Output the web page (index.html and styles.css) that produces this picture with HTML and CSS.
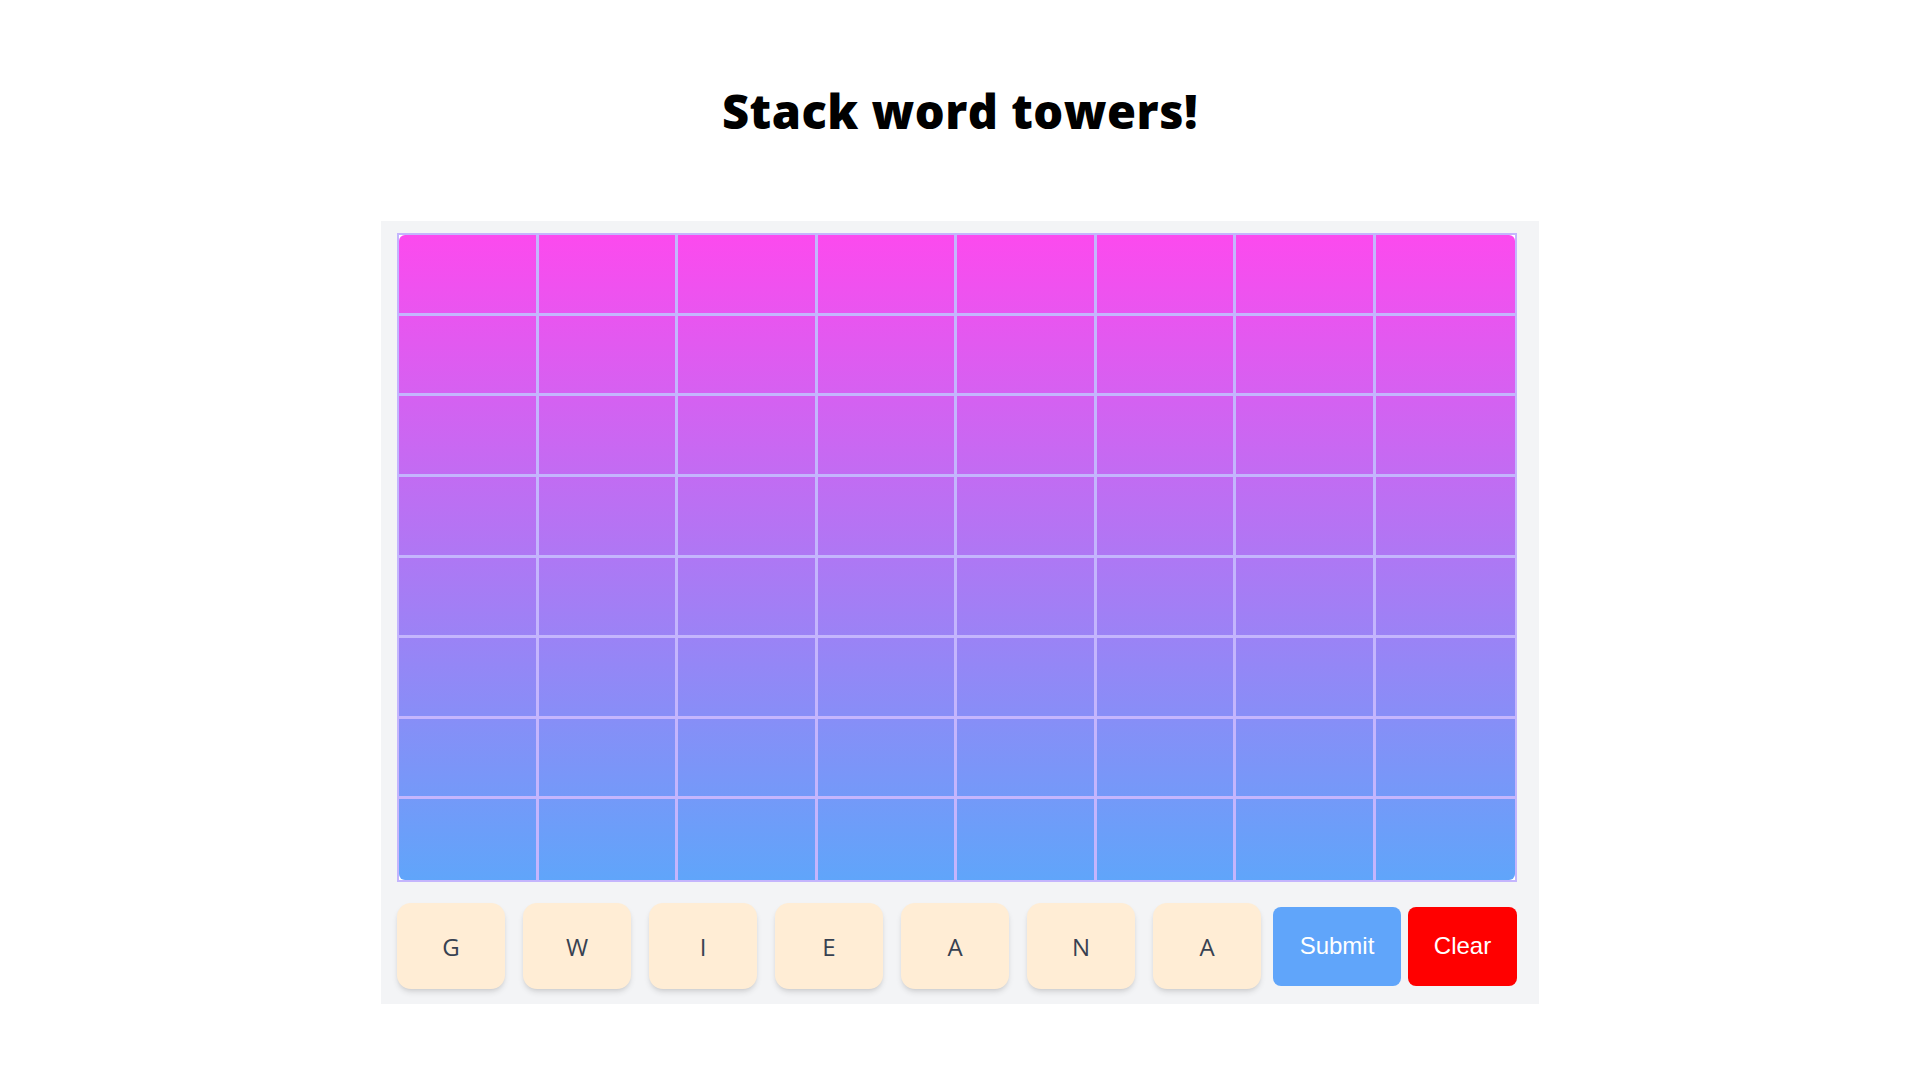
FILE: index.html
```html
<!DOCTYPE html>
<html lang="en">
<head>
<meta charset="utf-8">
<title>Stack word towers!</title>
<link rel="stylesheet" href="styles.css">
</head>
<body>
<main class="page">
  <h1 class="title">Stack word towers!</h1>
  <section class="panel">
    <div class="board">
      <div class="grid">
        <div class="cell"></div><div class="cell"></div><div class="cell"></div><div class="cell"></div><div class="cell"></div><div class="cell"></div><div class="cell"></div><div class="cell"></div>
        <div class="cell"></div><div class="cell"></div><div class="cell"></div><div class="cell"></div><div class="cell"></div><div class="cell"></div><div class="cell"></div><div class="cell"></div>
        <div class="cell"></div><div class="cell"></div><div class="cell"></div><div class="cell"></div><div class="cell"></div><div class="cell"></div><div class="cell"></div><div class="cell"></div>
        <div class="cell"></div><div class="cell"></div><div class="cell"></div><div class="cell"></div><div class="cell"></div><div class="cell"></div><div class="cell"></div><div class="cell"></div>
        <div class="cell"></div><div class="cell"></div><div class="cell"></div><div class="cell"></div><div class="cell"></div><div class="cell"></div><div class="cell"></div><div class="cell"></div>
        <div class="cell"></div><div class="cell"></div><div class="cell"></div><div class="cell"></div><div class="cell"></div><div class="cell"></div><div class="cell"></div><div class="cell"></div>
        <div class="cell"></div><div class="cell"></div><div class="cell"></div><div class="cell"></div><div class="cell"></div><div class="cell"></div><div class="cell"></div><div class="cell"></div>
        <div class="cell"></div><div class="cell"></div><div class="cell"></div><div class="cell"></div><div class="cell"></div><div class="cell"></div><div class="cell"></div><div class="cell"></div>
      </div>
    </div>
    <div class="controls">
      <div class="letters">
        <button class="tile">G</button>
        <button class="tile">W</button>
        <button class="tile">I</button>
        <button class="tile">E</button>
        <button class="tile">A</button>
        <button class="tile">N</button>
        <button class="tile">A</button>
      </div>
      <div class="actions">
        <button class="btn btn-submit">Submit</button>
        <button class="btn btn-clear">Clear</button>
      </div>
    </div>
  </section>
</main>
</body>
</html>
```
FILE: styles.css
```css
* { box-sizing: border-box; }
html, body { margin: 0; padding: 0; background: #ffffff; }
body { font-family: "Open Sans", "Liberation Sans", sans-serif; }

.page {
  display: flex;
  flex-direction: column;
  align-items: center;
}

.title {
  margin: 82px 0 0 0;
  height: 58px;
  line-height: 58px;
  font-family: "Open Sans", "Lato", sans-serif;
  font-weight: 800;
  font-size: 47px;
  color: #000;
  letter-spacing: 0.5px;
}

.panel {
  margin-top: 81px;
  width: 1158px;
  background: #f3f4f6;
  padding: 12px 22px 15px 16px;
}

.board {
  width: 1120px;
  height: 649px;
  border: 2px solid #c4b5fd;
  background: #ffffff;
}

.grid {
  width: 100%;
  height: 100%;
  border-radius: 6px;
  background: linear-gradient(to bottom, #fc4aee 0%, #60a5fa 100%);
  display: grid;
  grid-template-columns: repeat(8, 1fr);
  grid-template-rows: repeat(8, 1fr);
}

.cell {
  border-right: 3px solid #c4b5fd;
  border-bottom: 3px solid #c4b5fd;
}
.cell:nth-child(8n) { border-right: none; }
.cell:nth-last-child(-n+8) { border-bottom: none; }

.controls {
  margin-top: 21px;
  display: flex;
  align-items: center;
}

.letters {
  display: flex;
  gap: 18px;
}

.tile {
  width: 108px;
  height: 86px;
  border: none;
  border-radius: 14px;
  background: #ffedd5;
  color: #374151;
  font-family: "Open Sans", "Liberation Sans", sans-serif;
  font-size: 24px;
  box-shadow: 0 4px 6px -1px rgba(0,0,0,0.12), 0 2px 4px -2px rgba(0,0,0,0.1);
  padding: 0;
}

.actions {
  display: flex;
  gap: 7px;
  margin-left: 12px;
}

.btn {
  height: 79px;
  border: none;
  border-radius: 8px;
  color: #ffffff;
  font-family: "Liberation Sans", Arial, sans-serif;
  font-size: 24px;
  padding: 0;
}
.btn-submit { width: 128px; background: #60a5fa; }
.btn-clear { width: 109px; background: #ff0000; }
```
